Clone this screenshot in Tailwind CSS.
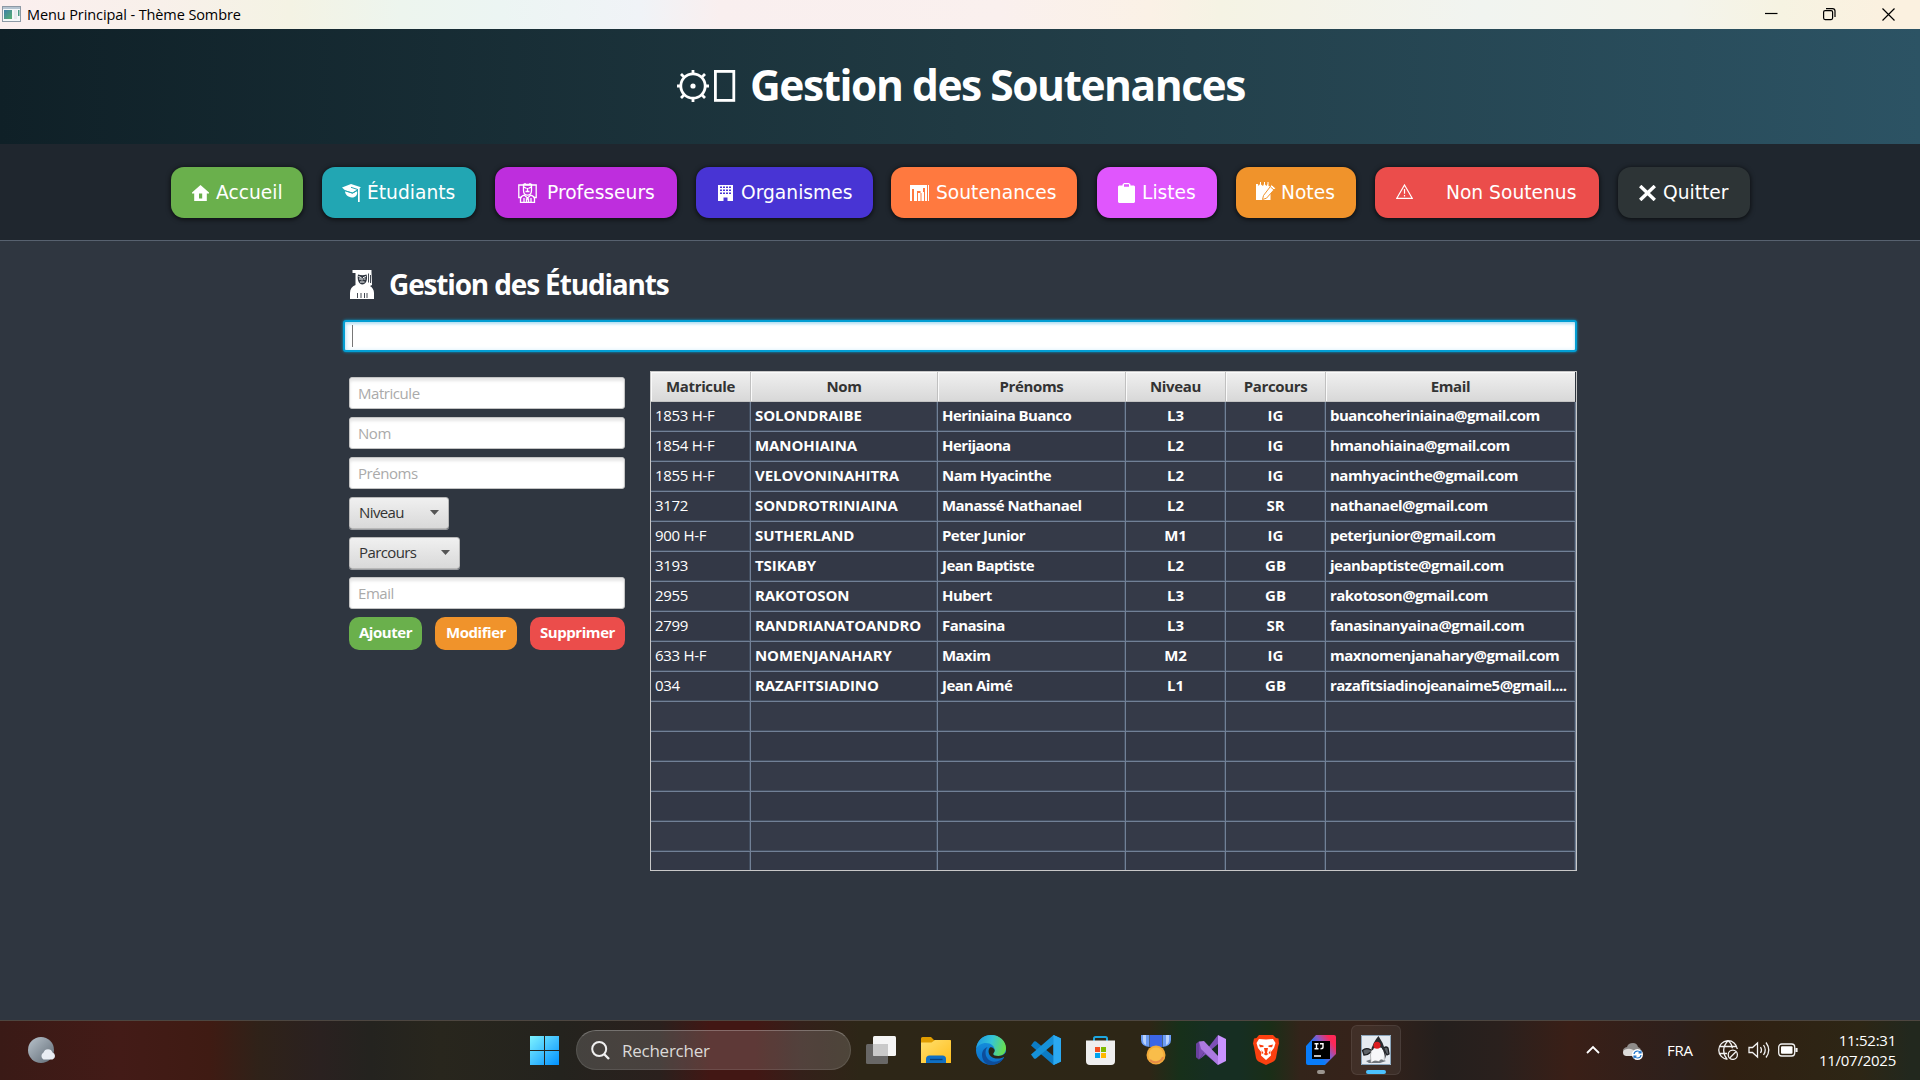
<!DOCTYPE html>
<html lang="fr">
<head>
<meta charset="utf-8">
<title>Menu Principal - Thème Sombre</title>
<script src="https://cdn.jsdelivr.net/npm/@tailwindcss/browser@4"></script>
</head>
<body class="w-[1920px] h-[1080px] overflow-hidden bg-[#2f3640] flex flex-col font-['Open_Sans','Noto_Sans',sans-serif] text-white">

<!-- Window title bar -->
<header class="h-[29px] flex items-center shrink-0 text-black bg-[linear-gradient(90deg,#fbefef_0px,#f8f0ea_160px,#f4f3e4_290px,#edf5ee_400px,#ecf5f3_500px,#f0f3f7_640px,#f9efef_720px,#faf0ee_1000px,#fbf1e6_1150px,#f5f3e4_1220px,#f4f3e8_1300px,#f1f4f0_1480px,#f4f4ec_1680px,#f6f3e2_1780px,#fbf1e0_1880px)]">
  <svg class="ml-0.5 mb-0.5 w-[19px] h-4" viewBox="0 0 19 16"><defs><linearGradient id="wi" x1="0" y1="0" x2="1" y2="1"><stop offset="0" stop-color="#3f7fa8"/><stop offset="1" stop-color="#55b070"/></linearGradient></defs><rect x=".5" y=".5" width="18" height="15" fill="#f4f7f8" stroke="#8d99a5"/><rect x="1" y="1" width="17" height="2" fill="#b4c3d0"/><rect x="2" y="4" width="8" height="9" fill="url(#wi)"/><rect x="12" y="4" width="3" height="9" fill="#e4e9ed"/><rect x="16" y="4" width="1.5" height="6" fill="#4a9a86"/></svg>
  <span class="ml-1.5 pt-0.5 text-[14.5px] leading-none tracking-[-0.1px]">Menu Principal - Thème Sombre</span>
  <svg class="ml-auto mb-0.5 mr-[24px] w-[131px] h-[14px]" viewBox="0 0 131 14" fill="none" stroke="#000" stroke-width="1.2"><path d="M0 6.500h12.500"/><rect x="58.600" y="3.600" width="9" height="9" rx="1.500"/><path d="M61 1.600h6.500a2.500 2.500 0 0 1 2.500 2.500v6"/><path d="M117.500 1.500l12 12M129.500 1.500l-12 12"/></svg>
</header>

<!-- Application banner -->
<section class="h-[115px] shrink-0 flex items-center justify-start pl-[677px] bg-linear-to-r/srgb from-[#0f2027] via-[#203a43] to-[#2c5364]">
  <svg class="mb-0.5 w-[60px] h-8" viewBox="0 0 60 32" fill="none" stroke="#fff"><circle cx="16" cy="16" r="12.200" stroke-width="2.800"/><circle cx="16" cy="16" r="2.600" fill="#fff" stroke="none"/><path stroke-width="2.800" d="M16 0v4M16 28v4M0 16h4M28 16h4M4 4l3.500 3.500M24.500 24.500l3.500 3.500M28 4l-3.500 3.500M7.500 24.500l-3.500 3.500"/><rect x="38.400" y="1.400" width="18.400" height="29" stroke-width="2.800"/></svg>
  <h1 class="ml-[13px] mb-0.5 text-[42.500px] leading-none font-bold tracking-[-1.470px] whitespace-nowrap">Gestion des Soutenances</h1>
</section>

<!-- Navigation -->
<nav class="h-[97px] shrink-0 pt-[23px] pl-[171px] flex items-start bg-[#1f262e] border-b border-[#57616f] font-['DejaVu_Sans',sans-serif] text-[18.67px] leading-none whitespace-nowrap">
  <button class="w-[132px] h-[51px] mr-[19px] pl-[21px] flex items-center gap-[7px] rounded-[13px] bg-[#6ab04c] shadow-[0_1px_4px_1px_rgba(0,0,0,.55)]">
    <svg class="w-[17px] h-4" viewBox="0 0 17 16" fill="#fff"><path fill-rule="evenodd" d="M8.500 0L17 7.500V8.500h-2.200V16H2.200V8.500H0V7.500zM7 8.500V13.500h3.200V8.500z"/></svg><span class="pt-0.5">Accueil</span></button>
  <button class="w-[154px] h-[51px] mr-[19px] pl-5 flex items-center gap-1.5 rounded-[13px] bg-[#22a6b3] shadow-[0_1px_4px_1px_rgba(0,0,0,.55)]">
    <svg class="w-[19px] h-[18px]" viewBox="0 0 19 18" fill="#fff"><path d="M0 3.500L9 0l10 3.200-8.500 5.300L3 6.200z"/><path d="M3 7l7.500 2.500L15 7c1 4-1.500 6.500-5 6.500C6 13 3 10.500 3 7z"/><path d="M16 4h1.700v14H16z"/><path d="M9 3.300l7 2.300M3 6.800l7.500 2.400 4.500-2.600" fill="none" stroke="#22a6b3"/></svg><span class="pt-0.5">Étudiants</span></button>
  <button class="w-[182px] h-[51px] mr-[19px] pl-[23px] flex items-center gap-[10px] rounded-[13px] bg-[#be2edd] shadow-[0_1px_4px_1px_rgba(0,0,0,.55)]">
    <svg class="w-[19px] h-[20px]" viewBox="0 0 19 20" fill="none" stroke="#fff" stroke-width="1.300"><path d="M3.500 14.500H.8V2h17.400v12.500h-2.500"/><path d="M5.500 1.500h8v6c0 3-1.800 4.700-4 4.700s-4-1.700-4-4.700zM6 4l2.500 1.500M13 4l-2.500 1.500M7.500 8.500h4M9.500 5v3M7 0v2M12 0v2"/><path d="M2.500 19.300v-3.800c0-1.800 1.500-2.500 3.800-3.300l3.200 2.800 3.200-2.800c2.300.8 3.800 1.500 3.800 3.300v3.800zM6 19v-4M13 19v-4M8.500 19v-3h2v3"/></svg><span class="pt-0.5">Professeurs</span></button>
  <button class="w-[177px] h-[51px] mr-[18px] pl-[22px] flex items-center gap-2 rounded-[13px] bg-[#4834d4] shadow-[0_1px_4px_1px_rgba(0,0,0,.55)]">
    <svg class="w-[15px] h-4" viewBox="0 0 15 16" fill="#fff"><path d="M0 0h15v16H9.500v-3.500h-4V16H0z"/><path d="M2 2.200h11M2 5.200h11M2 8.200h11" stroke="#4834d4" stroke-width="1.500" stroke-dasharray="2 1"/></svg><span class="pt-0.5">Organismes</span></button>
  <button class="w-[186px] h-[51px] mr-5 pl-[19px] flex items-center gap-[7px] rounded-[13px] bg-[#ff793f] shadow-[0_1px_4px_1px_rgba(0,0,0,.55)]">
    <svg class="w-[19px] h-4" viewBox="0 0 19 16" fill="#fff"><path d="M0 0h17v3H13v5h-2.500V6H7V4H2v12H0zM4 4h3v12H4zM8 8h2.500v8H8zM11.500 7H14v9h-2.500zM15 3h2v13h-2zM18 0h1v16h-1z"/></svg><span class="pt-0.5">Soutenances</span></button>
  <button class="w-[120px] h-[51px] mr-[19px] pl-[21px] flex items-center gap-[7px] rounded-[13px] bg-[#e056fd] shadow-[0_1px_4px_1px_rgba(0,0,0,.55)]">
    <svg class="w-[17px] h-5" viewBox="0 0 17 20" fill="#fff"><path fill-rule="evenodd" d="M1 2.500h3.500V1.500L6 0h5l1.500 1.500v1H16l1 1V19l-1 1H1l-1-1V3.500zM6 1.300v2.500h5V1.300z"/></svg><span class="pt-0.5">Listes</span></button>
  <button class="w-[120px] h-[51px] mr-[19px] pl-5 flex items-center gap-[5px] rounded-[13px] bg-[#f0932b] shadow-[0_1px_4px_1px_rgba(0,0,0,.55)]">
    <svg class="mb-1 w-5 h-[18px]" viewBox="0 0 20 18" fill="#fff"><path d="M0 2h2l.500 2 1.500-2V0h1v2.500L7 4l1-2V0h1v2.500L10.500 4l1-2V0h1v4l2 .5V18H0z"/><path d="M15.500 2.500l4.500 4-2 1.200-7.500 8.500-4 1.300 1-4L14 5z" stroke="#f0932b"/><path d="M14.500 5l3.500 3" stroke="#f0932b"/></svg><span class="pt-0.5">Notes</span></button>
  <button class="w-[224px] h-[51px] mr-[19px] pl-[21px] flex items-center gap-[33px] rounded-[13px] bg-[#eb4d4b] shadow-[0_1px_4px_1px_rgba(0,0,0,.55)]">
    <svg class="mb-0.5 w-[17px] h-[15px]" viewBox="0 0 17 15" fill="none" stroke="#fff" stroke-width="1.200"><path d="M8.500 1L16.200 14.300H.8zM8.500 5v4.800M8.500 11v1.600"/></svg><span class="pt-0.5">Non Soutenus</span></button>
  <button class="w-[132px] h-[51px] pl-[21px] flex items-center gap-[7px] rounded-[13px] bg-[#2d3436] shadow-[0_1px_4px_1px_rgba(0,0,0,.55)]">
    <svg class="w-[17px] h-4" viewBox="0 0 17 16" stroke="#fff" stroke-width="3.400"><path d="M1.200 1l14.600 14M15.800 1L1.200 15"/></svg><span class="pt-0.5">Quitter</span></button>
</nav>

<!-- Student management -->
<main class="flex-1 pl-[343px] flex flex-col">
  <div class="mt-[27px] pl-[7px] h-8 flex items-center">
    <svg class="w-[24px] h-[29px]" viewBox="0 0 24 29" fill="#fff"><path d="M2.500 0h19v2L22 15l-2 1c2.500 1.500 4 4 4 7v6H0v-6c0-4 2-6.500 5.500-8V3H2.500z"/><path d="M8 4.500c3 1 6 1 8.500 0 1 3 1 9-4 10-4-.500-5.500-5-4.500-10z" fill="#2f3640"/><path d="M8.500 6.500l3 1.200M16 6.500l-3 1.200M9 9h2M13.500 9h2M10 12h4.500M12 8v2.500" stroke="#fff" stroke-width="1"/><path d="M18.500 3.500v9M20.500 5v8M7.500 23v5M11 23v5M14.500 23v5M17 23v5" stroke="#2f3640" stroke-width=".9"/></svg>
    <h2 class="ml-[15px] text-[28px] leading-none font-bold tracking-[-1.150px]">Gestion des Étudiants</h2>
  </div>
  <div class="mt-5 w-[1234px] h-8 rounded-[3px] border-2 border-[#039ed3] bg-white shadow-[0_0_3px_#039ed3,inset_0_2px_3px_#b5dff2,inset_2px_0_4px_#d8effa] pl-[7px] py-[3px]"><div class="w-px h-[22px] bg-[#777]"></div></div>

  <div class="mt-[19px] flex items-start">
    <form class="ml-1.5 mt-1.5 w-[276px] flex flex-col gap-2 text-[15px] leading-none tracking-[-0.450px]">
      <div class="h-8 rounded-[3px] bg-white border border-[#c4c4c4] shadow-[inset_0_3px_3px_#e6e6e6] flex items-center pl-2 text-[#aaa]">Matricule</div>
      <div class="h-8 rounded-[3px] bg-white border border-[#c4c4c4] shadow-[inset_0_3px_3px_#e6e6e6] flex items-center pl-2 text-[#aaa]">Nom</div>
      <div class="h-8 rounded-[3px] bg-white border border-[#c4c4c4] shadow-[inset_0_3px_3px_#e6e6e6] flex items-center pl-2 text-[#aaa]">Prénoms</div>
      <div class="w-[100px] h-8 rounded-[3px] border border-[#b8b8b8] bg-linear-to-b from-[#f0f0f0] to-[#d9d9d9] shadow-[0_1px_0_#9a9ca0] flex items-center justify-between pl-[9px] pr-[9px] pb-0.5 text-[#333] tracking-[-0.600px]">Niveau<svg class="w-[9px] h-[5px]" viewBox="0 0 9 5"><path d="M0 0h9L4.500 5z" fill="#555"/></svg></div>
      <div class="w-[111px] h-8 rounded-[3px] border border-[#b8b8b8] bg-linear-to-b from-[#f0f0f0] to-[#d9d9d9] shadow-[0_1px_0_#9a9ca0] flex items-center justify-between pl-[9px] pr-[9px] pb-0.5 text-[#333] tracking-[-0.600px]">Parcours<svg class="w-[9px] h-[5px]" viewBox="0 0 9 5"><path d="M0 0h9L4.500 5z" fill="#555"/></svg></div>
      <div class="h-8 rounded-[3px] bg-white border border-[#c4c4c4] shadow-[inset_0_3px_3px_#e6e6e6] flex items-center pl-2 text-[#aaa]">Email</div>
      <div class="flex justify-between font-bold text-[15px]">
        <button type="button" class="w-[73px] h-[33px] rounded-[10px] bg-[#6ab04c] pb-0.5">Ajouter</button>
        <button type="button" class="w-[82px] h-[33px] rounded-[10px] bg-[#f0932b] pb-0.5">Modifier</button>
        <button type="button" class="w-[95px] h-[33px] rounded-[10px] bg-[#eb4d4b] pb-0.5">Supprimer</button>
      </div>
    </form>

    <!-- Student table -->
    <div class="ml-[25px] w-[927px] h-[500px] border border-[#c8c8c8] overflow-hidden text-[15px] leading-none whitespace-nowrap">
      <div class="w-[924px] h-[30px] grid grid-cols-[100px_187px_188px_100px_100px_249px] bg-linear-to-b from-[#f0f0f0] to-[#d8d8d8] border-b border-[#c4c4c4] text-[#333] font-bold text-center tracking-[-0.350px]" id="head"></div>
      <div id="rows"></div>
    </div>
  </div>
</main>

<!-- Taskbar -->
<footer class="h-[60px] shrink-0 border-t border-[#4d4640] flex items-start bg-[linear-gradient(90deg,#3a1a16_0px,#431b17_120px,#3f1b13_210px,#2f2219_260px,#2a2120_320px,#24231f_370px,#28261d_440px,#24231e_560px,#2a201d_660px,#421714_710px,#421714_755px,#34201a_800px,#2d2617_860px,#2d2616_1150px,#17301a_1180px,#162e22_1210px,#162e22_1240px,#1a2e17_1270px,#33241a_1300px,#36221a_1370px,#241f1d_1440px,#2a201d_1500px,#3a1f17_1570px,#2d201c_1680px,#302012_1730px,#2d2615_1860px,#22281e_1910px)]">
  <svg class="ml-7 mt-4 w-7 h-[27px]" viewBox="0 0 28 27"><defs><linearGradient id="moon" x1="0" y1="0" x2="1" y2="1"><stop offset="0" stop-color="#b9c3cc"/><stop offset="1" stop-color="#5f6a74"/></linearGradient></defs><circle cx="13" cy="13" r="13" fill="url(#moon)"/><path d="M15.500 22.500a4 4 0 0 1 0-7 4.700 4.700 0 0 1 9 0 3.700 3.700 0 0 1 0 7z" fill="#e9edf3"/></svg>
  <svg class="ml-[474px] mt-[15px] w-[29px] h-[29px]" viewBox="0 0 29 29"><defs><linearGradient id="win" x1="0" y1="0" x2="1" y2="1"><stop offset="0" stop-color="#7df3ff"/><stop offset=".5" stop-color="#42c1ff"/><stop offset="1" stop-color="#0091ff"/></linearGradient></defs><path fill="url(#win)" d="M0 0h14v14H0zM15 0h14v14H15zM0 15h14v14H0zM15 15h14v14H15z"/></svg>
  <div class="ml-[17px] mt-[9px] w-[275px] h-10 rounded-full bg-white/15 border border-white/10 border-t-white/25 flex items-center pl-3.5">
    <svg class="w-[19px] h-[19px]" viewBox="0 0 19 19" fill="none" stroke="#f0f0f0" stroke-width="2"><circle cx="8.200" cy="8" r="7"/><path d="M13 13l5 5" stroke-width="2.400"/></svg>
    <span class="ml-3 text-[17px] leading-none text-[#dcdad8] tracking-[-0.250px]">Rechercher</span>
  </div>
  <div class="ml-[15px] mt-[14px] flex gap-[25px]">
    <svg class="size-[30px]" viewBox="0 0 30 30"><rect y="9" width="22" height="20" rx="1.500" fill="#686766"/><rect x="7" y="1" width="23" height="20" rx="1.500" fill="#f5f5f5"/><path d="M7 9h15v12H8.500L7 19.500z" fill="#c9c9c9"/></svg>
    <svg class="size-[30px]" viewBox="0 0 30 30"><defs><linearGradient id="fo" x1="0" y1="0" x2="1" y2="1"><stop offset="0" stop-color="#ffdf6e"/><stop offset="1" stop-color="#ffbe1c"/></linearGradient></defs><path d="M0 3.500Q0 2 1.500 2H10l3 3H30v10H0z" fill="#e09c00"/><path d="M0 7.500h10.500L14 5h14.500Q30 5 30 6.500V28H0z" fill="url(#fo)"/><path d="M5 28v-4q0-3.500 3.500-3.500h13q3.500 0 3.500 3.500v4z" fill="#0f6fc4"/><path d="M9 24.500h12.500" stroke="#063f7c" stroke-width="1.300"/></svg>
    <svg class="size-[30px]" viewBox="0 0 30 30"><defs><linearGradient id="e1" x1="0" y1="0.300" x2="1" y2=".5"><stop offset="0" stop-color="#1d9be3"/><stop offset=".5" stop-color="#35c5d6"/><stop offset="1" stop-color="#6ae04a"/></linearGradient><linearGradient id="e2" x1="0" y1="0" x2="0" y2="1"><stop offset="0" stop-color="#1797e0"/><stop offset="1" stop-color="#0b6cc9"/></linearGradient></defs><circle cx="15" cy="15" r="15" fill="url(#e2)"/><path d="M.2 13.500C1.200 5 7.500 0 15 0c9 0 15 6.500 15 13 0 5-3.700 8-7.800 8-3.500 0-5-1-5-2 0-.8 1.500-1.500 1.500-4 0-3.500-3.500-7-8.700-7C5.500 8 1.500 10.500.2 13.500z" fill="url(#e1)"/><path d="M11.500 12C9 15 8.800 20 11.500 23.500 15 28 22 27.500 27.800 23 25 27.500 20.500 30 15 30 9 30 5.800 24 6 19.500c.2-4 2.800-6.700 5.500-7.500z" fill="#0d4d9b"/><path d="M14 12.500c-2 2-2 6 .5 8.500 3.500 3.200 9 3.200 13 1.200.8-.3 1.300.2.700.8l3-1-1-5c-2 3-5 4-8 4-3.500 0-5-1-5-2s1.500-1.500 1.500-4c-1-2-3-3.500-4.700-2.500z" fill="#2a2717"/></svg>
    <svg class="size-[30px]" viewBox="0 0 30 30"><path d="M22.500 0L30 3.500v23L22.500 30 0 10.500 3 6.500Q4 6 5 6.500L22.500 21z" fill="#0c7cc5"/><path d="M22.500 30L30 26.500v-23L22.500 0 0 19.500 3 23.500Q4 24 5 23.500L22.500 9z" fill="#1691d8"/><path d="M22.500 0L30 3.500v23L22.500 30z" fill="#2ba9f1"/></svg>
    <svg class="size-[30px]" viewBox="0 0 30 30"><path d="M8 7V3.500Q8 2 9.500 2h10Q21 2 21 3.500V7" fill="none" stroke="#1ea7e0" stroke-width="2"/><path d="M0 5.500h29V26q0 4-4 4H4q-4 0-4-4z" fill="#efefef"/><path d="M9 12h5v5H9z" fill="#f25022"/><path d="M15 12h5v5h-5z" fill="#7fba00"/><path d="M9 18h5v5H9z" fill="#00a4ef"/><path d="M15 18h5v5h-5z" fill="#ffb900"/></svg>
    <svg class="size-[30px]" viewBox="0 0 30 30"><path d="M0 0h8.500v12Q0 11 0 5zM21.500 0H30v5q0 6-8.500 7z" fill="#6b9cf5"/><path d="M2 0h3v10q-3-1-3-5zM25 0h3v5q0 4-3 5z" fill="#b9d2fc"/><path d="M9 0h12v12H9z" fill="#3c66e8"/><circle cx="15" cy="20" r="9.500" fill="#f3ab3a"/><circle cx="15" cy="20" r="7.500" fill="#f9bd4a"/><path d="M9 25a8 8 0 0 0 13-3" stroke="#e58b47" stroke-width="2" fill="none"/></svg>
    <svg class="size-[30px]" viewBox="0 0 30 30"><path d="M0 9l3-2.500L22 22v8l-14-12-5 6.500L0 22z" fill="#7b4bb0"/><path d="M0 9l3-2.500v18L0 22z" fill="#68409e"/><path d="M3 24.500L22 0v9L6.500 22z" fill="#7d50b8"/><path d="M3 6.500L8 6l14 15v9L5 14z" fill="#ac7ae0"/><path d="M22 0l8 4v22l-8 4z" fill="#c993ff"/></svg>
    <svg class="size-[30px]" viewBox="0 0 30 30"><path d="M8 0h14l3 3 2.500.5.500 5-1 3.500-2 11q-.5 2-2.500 3.500L15 30l-7.500-3.500Q5.500 25 5 23L3 12 2 8.500l1-5L5.500 3z" fill="#fb4010"/><path d="M15 4.500l7-.5 2.500 4-1.500 5-3.500 4.500.5 3-5 4.500-5-4.500.5-3L7 13 5.500 8 8 4z" fill="#fff"/><path d="M8 9.500l4.500 1v1.500L9 12.200zM22 9.500l-4.500 1V12l3.500.2zM13 13h4l-1 5 1.500 1-2.500 1.500L12.500 19l1.500-1zM10.500 15l2 3-1.500 1zM19.500 15l-2 3 1.500 1z" fill="#fb4010"/></svg>
    <div class="flex flex-col items-center gap-[5px]"><svg class="size-[30px]" viewBox="0 0 30 30"><defs><linearGradient id="ij" x1="0" y1=".8" x2="1" y2=".1"><stop offset=".35" stop-color="#087cfa"/><stop offset=".6" stop-color="#8a5ac8"/><stop offset=".85" stop-color="#fe2857"/></linearGradient></defs><path d="M10 0h18q2 0 2 2v17L19 30H2q-2 0-2-2V11z" fill="url(#ij)"/><path d="M6 6h18v18H6z" fill="#000"/><path d="M8.500 8.700h4M10.500 8.700v5M8.500 13.700h4M14 8.700h3v3.500q0 1.500-2.500 1.500M8 21h7" stroke="#fff" stroke-width="1.400" fill="none"/></svg><i class="block w-2 h-1 rounded-full bg-[#9b958f]"></i></div>
    <div class="relative flex flex-col items-center gap-[5px]">
      <i class="absolute -left-2.5 -top-2.5 w-[50px] h-[50px] rounded-md bg-white/6 border border-white/8"></i>
      <svg class="relative size-[30px]" viewBox="0 0 30 30"><path d="M0 0h30v30H0z" fill="#e6ebf1"/><path d="M.5.500h29v29H.500z" fill="none" stroke="#8ba6bc"/><path d="M5 26q8-3 12-3l8 3-6 2H8z" fill="#6f757c"/><path d="M10 15Q5 12 1.500 15.500L3 20q4 0 7-3M23 13q2-2 4 0l1 6-2 1-3-5" fill="#5c6166" stroke="#1c1e22" stroke-width="1.300"/><path d="M11 12q5 3 11 0 3 6 1 14-3-3-5 .500-5-2-8 1.500-1.500-8 1-16z" fill="#f7f8fa" stroke="#777" stroke-width=".5"/><path d="M17.500 1q5 7 7 15l.500 8-3-9q-4-5-7-2l-5 3q2-9 7.500-15z" fill="#2a2c30"/><path d="M12 14q3-2 4-2l5 1-1 4q-5 1-8-3z" fill="#f7f8fa"/><circle cx="16" cy="10.200" r="3.500" fill="#dc1c20"/></svg>
      <i class="relative block w-5 h-1 rounded-full bg-[#4cc2ff]"></i></div>
  </div>
  <svg class="ml-[195px] mt-6 w-[14px] h-[9px]" viewBox="0 0 14 9" fill="none" stroke="#fff" stroke-width="1.800"><path d="M1 8l6-6 6 6"/></svg>
  <svg class="ml-[23px] mt-[22px] w-5 h-[17px]" viewBox="0 0 20 17"><path d="M3 10Q0 10 0 7.500T4 4q1-4 6-4 4 0 5 4 3 1 3 4l-6 5H3z" fill="#8f8c8a"/><path d="M3 13q-3-.5-3-3.500T4 6q5-1 8 3v4z" fill="#dedcda"/><circle cx="14.500" cy="11.500" r="5.500" fill="#fff"/><path d="M11 11q.5-3 3.500-3 2 0 3 1.500M18 12q-.5 3-3.500 3-2 0-3-1.500M18 7.500v2.300h-2.500M11 15.500v-2.300h2.500" fill="none" stroke="#1d73c9" stroke-width="1.200"/></svg>
  <span class="ml-6 mt-[22px] w-[26px] text-[15px] leading-none tracking-[-0.200px]">FRA</span>
  <svg class="ml-[25px] mt-[19px] w-[81px] h-5" viewBox="0 0 81 20" fill="none" stroke="#f2f2f2" stroke-width="1.300"><path d="M9.500 19.300A9.300 9.300 0 1 1 19.300 9M1.500 6.500h17M1.500 13.500H9M9 19Q5.500 15 5.700 10T10 .8q4 3 4.300 7.500"/><circle cx="14.800" cy="14.800" r="4.600"/><path d="M11.700 18l6.300-6.300"/><path d="M31 7.500h3.500L39.500 3v14l-5-4.500H31zM42.500 7q2 3 0 6M45.500 5q3.500 5 0 10M48 2.500q5.500 7.500 0 15"/><rect x="60.700" y="4" width="16" height="12" rx="3"/><rect x="63" y="6.200" width="11.500" height="7.600" rx="1" fill="#fff" stroke="none"/><path d="M78.500 8v4" stroke-width="2.200"/></svg>
  <div class="ml-[13px] mt-[9px] w-[84px] text-right text-[15px] leading-5 tracking-[-0.250px]"><div>11:52:31</div><div>11/07/2025</div></div>
</footer>

<script>
const heads = ["Matricule", "Nom", "Prénoms", "Niveau", "Parcours", "Email"];
const students = [
  ["1853 H-F", "SOLONDRAIBE", "Heriniaina Buanco", "L3", "IG", "buancoheriniaina@gmail.com"],
  ["1854 H-F", "MANOHIAINA", "Herijaona", "L2", "IG", "hmanohiaina@gmail.com"],
  ["1855 H-F", "VELOVONINAHITRA", "Nam Hyacinthe", "L2", "IG", "namhyacinthe@gmail.com"],
  ["3172", "SONDROTRINIAINA", "Manassé Nathanael", "L2", "SR", "nathanael@gmail.com"],
  ["900 H-F", "SUTHERLAND", "Peter Junior", "M1", "IG", "peterjunior@gmail.com"],
  ["3193", "TSIKABY", "Jean Baptiste", "L2", "GB", "jeanbaptiste@gmail.com"],
  ["2955", "RAKOTOSON", "Hubert", "L3", "GB", "rakotoson@gmail.com"],
  ["2799", "RANDRIANATOANDRO", "Fanasina", "L3", "SR", "fanasinanyaina@gmail.com"],
  ["633 H-F", "NOMENJANAHARY", "Maxim", "M2", "IG", "maxnomenjanahary@gmail.com"],
  ["034", "RAZAFITSIADINO", "Jean Aimé", "L1", "GB", "razafitsiadinojeanaime5@gmail...."]
];
const cell = [
  "pl-1 tracking-[-0.3px]",
  "pl-1 font-bold tracking-[-0.08px]",
  "pl-1 font-bold tracking-[-0.55px]",
  "text-center font-bold",
  "text-center font-bold",
  "pl-1 font-bold tracking-[-0.52px]"
];
document.getElementById("head").innerHTML = heads.map(h =>
  `<div class="border-r border-[#c0c0c0] last:border-r-0 shadow-[inset_1px_1px_0_#fafafa] leading-[29px]">${h}</div>`).join("");
let html = "";
for (let r = 0; r < 16; r++) {
  const s = students[r] || ["", "", "", "", "", ""];
  html += `<div class="h-[30px] w-[925px] grid grid-cols-[100px_187px_188px_100px_100px_250px] border-b border-[#718096] ${r % 2 ? "bg-[#333846]" : "bg-[#353a48]"}">` +
    s.map((t, i) => `<div class="border-r border-[#718096] shadow-[inset_-1px_-1px_0_#434e60] leading-[26px] ${cell[i]}">${t}</div>`).join("") + `</div>`;
}
document.getElementById("rows").innerHTML = html;
</script>
</body>
</html>
